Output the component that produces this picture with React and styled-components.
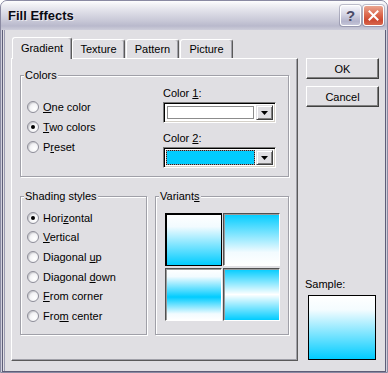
import styled, { createGlobalStyle } from "styled-components";

const CYAN = "#00ccff";
const FACE = "#e0dfe3";

const GlobalStyle = createGlobalStyle`
  html, body {
    margin: 0;
    padding: 0;
    background: #fff;
  }
  body {
    font-family: "Liberation Sans", Arial, sans-serif;
    font-size: 11px;
    color: #000;
  }
  * {
    box-sizing: border-box;
  }
  u {
    text-decoration: underline;
    text-underline-offset: 1px;
  }
`;

const Window = styled.div`
  width: 388px;
  height: 373px;
  display: flex;
  flex-direction: column;
  border: 1px solid #8a8aa2;
  border-radius: 7px 7px 0 0;
  background: #cfcfdc;
  overflow: hidden;
`;

const TitleBar = styled.div`
  height: 29px;
  flex: none;
  display: flex;
  align-items: center;
  padding: 0 3px 0 7px;
  background: linear-gradient(
    to bottom,
    #fefefe 0%,
    #f0f0f4 14%,
    #dcdce6 40%,
    #c8c8d7 68%,
    #b9b9cc 86%,
    #cdcdda 100%
  );
`;

const Title = styled.span`
  flex: 1;
  font-family: "Liberation Sans", Arial, sans-serif;
  font-weight: bold;
  font-size: 13px;
  color: #0a0a14;
  text-shadow: 1px 1px 0 rgba(255, 255, 255, 0.6);
`;

const CaptionButton = styled.div`
  width: 21px;
  height: 21px;
  margin-left: 2px;
  border: 1px solid #fff;
  border-radius: 3px;
  display: flex;
  align-items: center;
  justify-content: center;
  box-shadow: 0 0 0 1px rgba(90, 90, 120, 0.35);
  background: ${({ $close }) =>
    $close
      ? "linear-gradient(to bottom, #eaa58f 0%, #dc6a4f 45%, #cd4a32 75%, #d8664c 100%)"
      : "linear-gradient(to bottom, #f6f6fb 0%, #d4d4e4 45%, #b4b4cc 80%, #c4c4d8 100%)"};
  color: #4a4a66;
  font-weight: bold;
  font-size: 15px;
  line-height: 1;
`;

const Client = styled.div`
  flex: 1;
  margin: 0 1px 0 1px;
  display: flex;
  gap: 8px;
  padding: 7px 6px 10px 8px;
  background: ${FACE};
  border: 1px solid #5e5e78;
  border-top: none;
  box-shadow: inset 1px 0 0 ${FACE}, inset 2px 0 0 #9a9ab0;
`;

const TabArea = styled.div`
  width: 287px;
  display: flex;
  flex-direction: column;
`;

const TabStrip = styled.div`
  height: 21px;
  display: flex;
  align-items: flex-end;
  padding-left: 1px;
  position: relative;
  z-index: 1;
`;

const Tab = styled.div`
  width: ${({ $w }) => $w}px;
  height: ${({ $active }) => ($active ? 22 : 19)}px;
  margin-bottom: ${({ $active }) => ($active ? -1 : 0)}px;
  margin-right: ${({ $active }) => ($active ? 0 : 1)}px;
  display: flex;
  align-items: center;
  justify-content: center;
  padding-bottom: ${({ $active }) => ($active ? 2 : 0)}px;
  background: ${FACE};
  border: 1px solid;
  border-bottom: none;
  border-color: #fff #5a5a5a #fff #fff;
  border-radius: 3px 3px 0 0;
  box-shadow: inset -1px 0 0 #a0a0a8;
`;

const Panel = styled.div`
  height: 303px;
  display: flex;
  flex-direction: column;
  padding: 16px 8px 0 8px;
  border: 1px solid;
  border-color: #fff #5a5a5a #5a5a5a #fff;
  box-shadow: inset -1px -1px 0 #a0a0a8;
`;

const Group = styled.div`
  position: relative;
  width: ${({ $w }) => $w}px;
  height: ${({ $h }) => $h}px;
  border: 1px solid #a0a0a8;
  box-shadow: 1px 1px 0 #fff, inset 1px 1px 0 #fff;
`;

const Caption = styled.span`
  position: absolute;
  top: -7px;
  left: 3px;
  padding: 0 1px;
  line-height: 13px;
  background: ${FACE};
`;

const ColorsBody = styled.div`
  display: grid;
  grid-template-columns: 142px 113px;
  height: 100%;
`;

const RadioList = styled.div`
  display: flex;
  flex-direction: column;
  padding: ${({ $top }) => $top}px 0 0 6px;
`;

const RadioRow = styled.div`
  height: ${({ $h }) => $h}px;
  display: flex;
  align-items: center;
  gap: 4px;
`;

const RadioCircle = styled.span`
  width: 12px;
  height: 12px;
  flex: none;
  border-radius: 50%;
  display: flex;
  align-items: center;
  justify-content: center;
  border: 1px solid #8d8d98;
  background: radial-gradient(circle at 65% 65%, #ffffff 0%, #f4f4f6 45%, #d2d2da 100%);
  box-shadow: inset 1px 1px 1px rgba(0, 0, 0, 0.12);

  &::after {
    content: "";
    width: 4px;
    height: 4px;
    border-radius: 50%;
    background: #000;
    display: ${({ $on }) => ($on ? "block" : "none")};
  }
`;

const ColorColumn = styled.div`
  display: flex;
  flex-direction: column;
  padding-top: 10px;
`;

const FieldLabel = styled.div`
  line-height: 14px;
  margin-top: ${({ $top }) => $top}px;
  margin-bottom: 2px;
`;

const Combo = styled.div`
  height: 21px;
  display: flex;
  padding: 2px;
  background: #fff;
  border: 1px solid;
  border-color: #7a7a7a #fff #fff #7a7a7a;
  box-shadow: inset 1px 1px 0 #000, inset -1px -1px 0 #d4d0c8;
`;

const SwatchFrame = styled.div`
  flex: 1;
  display: flex;
  padding: 1px;
  margin-right: 1px;
  outline: ${({ $focus }) => ($focus ? "1px dotted #222" : "none")};
  outline-offset: -1px;
  background: ${({ $focus }) => ($focus ? "#9a9aa0" : "transparent")};
`;

const Swatch = styled.div`
  flex: 1;
  background: ${({ $color }) => $color};
  border: 1px solid ${({ $focus }) => ($focus ? CYAN : "#8c8c8c")};
`;

const DropButton = styled.div`
  width: 17px;
  display: flex;
  align-items: center;
  justify-content: center;
  background: ${FACE};
  border: 1px solid;
  border-color: ${FACE} #404040 #404040 ${FACE};
  box-shadow: inset 1px 1px 0 #fff, inset -1px -1px 0 #808080;
`;

const LowerRow = styled.div`
  display: flex;
  gap: 8px;
  margin-top: 19px;
`;

const TileGrid = styled.div`
  display: grid;
  grid-template-columns: 57px 57px;
  grid-template-rows: 53px 53px;
  column-gap: 1px;
  row-gap: 2px;
  padding: 16px 0 0 9px;
`;

const Tile = styled.div`
  background: ${({ $fill }) => $fill};
  border: 1px solid;
  border-color: ${({ $selected }) =>
    $selected ? "#000" : "#505050 #fff #fff #505050"};
  box-shadow: ${({ $selected }) =>
    $selected ? "inset 1px 1px 0 #000" : "inset 1px 1px 0 #9a9a9a"};
`;

const SideColumn = styled.div`
  width: 73px;
  display: flex;
  flex-direction: column;
  padding-top: 21px;
`;

const PushButton = styled.div`
  height: 21px;
  margin-bottom: 7px;
  display: flex;
  align-items: center;
  justify-content: center;
  background: ${FACE};
  border: 1px solid;
  border-color: #fff #404040 #404040 #fff;
  box-shadow: inset -1px -1px 0 #808080;
`;

const SampleLabel = styled.div`
  margin-top: auto;
  line-height: 14px;
  margin-bottom: 4px;
  margin-left: -1px;
`;

const SampleBox = styled.div`
  width: 68px;
  height: 65px;
  margin-left: 2px;
  margin-bottom: 1px;
  border: 1px solid #000;
  background: linear-gradient(to bottom, #fff 0%, #f4fcff 22%, ${CYAN} 100%);
`;

const DownArrow = () => (
  <svg width="7" height="4" viewBox="0 0 7 4">
    <polygon points="0,0 7,0 3.5,4" fill="#000" />
  </svg>
);

const CloseGlyph = () => (
  <svg width="11" height="11" viewBox="0 0 11 11">
    <path d="M1.5 1.5 L9.5 9.5 M9.5 1.5 L1.5 9.5" stroke="#fff" strokeWidth="2" strokeLinecap="square" />
  </svg>
);

const colorOptions = [
  { label: <><u>O</u>ne color</> },
  { label: <><u>T</u>wo colors</>, on: true },
  { label: <>P<u>r</u>eset</> },
];

const shadingOptions = [
  { label: <>Hori<u>z</u>ontal</>, on: true },
  { label: <><u>V</u>ertical</> },
  { label: <>Diagonal <u>u</u>p</> },
  { label: <>Diagonal <u>d</u>own</> },
  { label: <><u>F</u>rom corner</> },
  { label: <>Fro<u>m</u> center</> },
];

const variants = [
  { fill: `linear-gradient(to bottom, #fff 0%, #f2fbff 25%, ${CYAN} 100%)`, selected: true },
  { fill: `linear-gradient(to bottom, ${CYAN} 0%, #f2fbff 75%, #fff 100%)` },
  { fill: `linear-gradient(to bottom, #fff 0%, #f2fbff 15%, ${CYAN} 55%, #f2fbff 88%, #fff 100%)` },
  { fill: `linear-gradient(to bottom, ${CYAN} 0%, #fff 50%, ${CYAN} 100%)` },
];

const tabs = [
  { name: "Gradient", w: 60, active: true },
  { name: "Texture", w: 53 },
  { name: "Pattern", w: 53 },
  { name: "Picture", w: 53 },
];

export default function App() {
  return (
    <>
      <GlobalStyle />
      <Window>
        <TitleBar>
          <Title>Fill Effects</Title>
          <CaptionButton>?</CaptionButton>
          <CaptionButton $close>
            <CloseGlyph />
          </CaptionButton>
        </TitleBar>
        <Client>
          <TabArea>
            <TabStrip>
              {tabs.map((t) => (
                <Tab key={t.name} $w={t.w} $active={t.active}>
                  {t.name}
                </Tab>
              ))}
            </TabStrip>
            <Panel>
              <Group $w={269} $h={102}>
                <Caption>Colors</Caption>
                <ColorsBody>
                  <RadioList $top={21}>
                    {colorOptions.map((o, i) => (
                      <RadioRow key={i} $h={20}>
                        <RadioCircle $on={o.on} />
                        <span>{o.label}</span>
                      </RadioRow>
                    ))}
                  </RadioList>
                  <ColorColumn>
                    <FieldLabel $top={0}>
                      Color <u>1</u>:
                    </FieldLabel>
                    <Combo>
                      <SwatchFrame>
                        <Swatch $color="#fff" />
                      </SwatchFrame>
                      <DropButton>
                        <DownArrow />
                      </DropButton>
                    </Combo>
                    <FieldLabel $top={8}>
                      Color <u>2</u>:
                    </FieldLabel>
                    <Combo>
                      <SwatchFrame $focus>
                        <Swatch $color={CYAN} $focus />
                      </SwatchFrame>
                      <DropButton>
                        <DownArrow />
                      </DropButton>
                    </Combo>
                  </ColorColumn>
                </ColorsBody>
              </Group>
              <LowerRow>
                <Group $w={127} $h={139}>
                  <Caption>Shading styles</Caption>
                  <RadioList $top={11}>
                    {shadingOptions.map((o, i) => (
                      <RadioRow key={i} $h={19.6}>
                        <RadioCircle $on={o.on} />
                        <span>{o.label}</span>
                      </RadioRow>
                    ))}
                  </RadioList>
                </Group>
                <Group $w={134} $h={139}>
                  <Caption>
                    Variant<u>s</u>
                  </Caption>
                  <TileGrid>
                    {variants.map((v, i) => (
                      <Tile key={i} $fill={v.fill} $selected={v.selected} />
                    ))}
                  </TileGrid>
                </Group>
              </LowerRow>
            </Panel>
          </TabArea>
          <SideColumn>
            <PushButton>OK</PushButton>
            <PushButton>Cancel</PushButton>
            <SampleLabel>Sample:</SampleLabel>
            <SampleBox />
          </SideColumn>
        </Client>
      </Window>
    </>
  );
}
